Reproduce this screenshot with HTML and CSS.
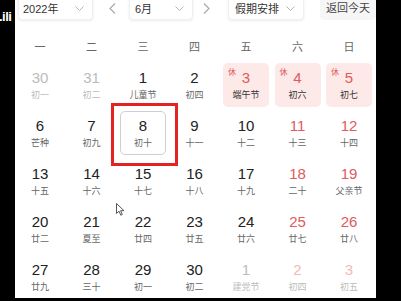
FILE: index.html
```html
<!DOCTYPE html>
<html lang="zh-CN">
<head>
    <meta charset="UTF-8">
    <meta name="viewport" content="width=device-width, initial-scale=1.0">
    <title>万年历 2022年6月</title>
    <link rel="stylesheet" href="styles.css">
</head>
<body>

    <!-- Logo de la vidéo -->
    <div class="logo">.ili</div>

    <div class="screen">

        <!-- Barre d'outils -->
        <div class="toolbar">
            <div class="select select-year">
                <span>2022年</span>
                <svg class="chevron" width="9" height="5" viewBox="0 0 9 5"><polyline points="0.5,0.5 4.5,4.5 8.5,0.5" /></svg>
            </div>
            <div class="nav nav-prev">
                <svg width="7" height="11" viewBox="0 0 7 11"><polyline points="6,0.5 1,5.5 6,10.5" /></svg>
            </div>
            <div class="select select-month">
                <span>6月</span>
                <svg class="chevron" width="9" height="5" viewBox="0 0 9 5"><polyline points="0.5,0.5 4.5,4.5 8.5,0.5" /></svg>
            </div>
            <div class="nav nav-next">
                <svg width="7" height="11" viewBox="0 0 7 11"><polyline points="1,0.5 6,5.5 1,10.5" /></svg>
            </div>
            <div class="select select-holiday">
                <span>假期安排</span>
                <svg class="chevron" width="9" height="5" viewBox="0 0 9 5"><polyline points="0.5,0.5 4.5,4.5 8.5,0.5" /></svg>
            </div>
            <div class="btn-today">返回今天</div>
        </div>

        <!-- En-tête des jours -->
        <div class="weekdays">
            <div>一</div><div>二</div><div>三</div><div>四</div><div>五</div><div>六</div><div>日</div>
        </div>

        <!-- Grille des jours -->
        <div class="days">
            <div class="day other"><div class="num">30</div><div class="lunar">初一</div></div>
            <div class="day other"><div class="num">31</div><div class="lunar">初二</div></div>
            <div class="day"><div class="num">1</div><div class="lunar">儿童节</div></div>
            <div class="day"><div class="num">2</div><div class="lunar">初四</div></div>
            <div class="day rest"><span class="tag">休</span><div class="num">3</div><div class="lunar">端午节</div></div>
            <div class="day rest"><span class="tag">休</span><div class="num">4</div><div class="lunar">初六</div></div>
            <div class="day rest"><span class="tag">休</span><div class="num">5</div><div class="lunar">初七</div></div>

            <div class="day"><div class="num">6</div><div class="lunar">芒种</div></div>
            <div class="day"><div class="num">7</div><div class="lunar">初九</div></div>
            <div class="day selected"><div class="num">8</div><div class="lunar">初十</div></div>
            <div class="day"><div class="num">9</div><div class="lunar">十一</div></div>
            <div class="day"><div class="num">10</div><div class="lunar">十二</div></div>
            <div class="day weekend"><div class="num">11</div><div class="lunar">十三</div></div>
            <div class="day weekend"><div class="num">12</div><div class="lunar">十四</div></div>

            <div class="day"><div class="num">13</div><div class="lunar">十五</div></div>
            <div class="day"><div class="num">14</div><div class="lunar">十六</div></div>
            <div class="day"><div class="num">15</div><div class="lunar">十七</div></div>
            <div class="day"><div class="num">16</div><div class="lunar">十八</div></div>
            <div class="day"><div class="num">17</div><div class="lunar">十九</div></div>
            <div class="day weekend"><div class="num">18</div><div class="lunar">二十</div></div>
            <div class="day weekend"><div class="num">19</div><div class="lunar">父亲节</div></div>

            <div class="day"><div class="num">20</div><div class="lunar">廿二</div></div>
            <div class="day"><div class="num">21</div><div class="lunar">夏至</div></div>
            <div class="day"><div class="num">22</div><div class="lunar">廿四</div></div>
            <div class="day"><div class="num">23</div><div class="lunar">廿五</div></div>
            <div class="day"><div class="num">24</div><div class="lunar">廿六</div></div>
            <div class="day weekend"><div class="num">25</div><div class="lunar">廿七</div></div>
            <div class="day weekend"><div class="num">26</div><div class="lunar">廿八</div></div>

            <div class="day"><div class="num">27</div><div class="lunar">廿九</div></div>
            <div class="day"><div class="num">28</div><div class="lunar">三十</div></div>
            <div class="day"><div class="num">29</div><div class="lunar">初一</div></div>
            <div class="day"><div class="num">30</div><div class="lunar">初二</div></div>
            <div class="day other"><div class="num">1</div><div class="lunar">建党节</div></div>
            <div class="day other weekend"><div class="num">2</div><div class="lunar">初四</div></div>
            <div class="day other weekend"><div class="num">3</div><div class="lunar">初五</div></div>
        </div>

        <!-- Cadre rouge d'annotation -->
        <div class="highlight"></div>

        <!-- Curseur de la souris -->
        <svg class="cursor" width="9" height="13" viewBox="0 0 9 13">
            <path d="M0.5,0.5 L0.5,10.5 L3,8.2 L4.8,12.2 L6.3,11.5 L4.6,7.7 L8,7.7 Z" />
        </svg>
    </div>

</body>
</html>
```

FILE: styles.css
```css
/* Style général */
body {
    margin: 0;
    background: #000;
    font-family: "Liberation Sans", "Noto Sans CJK SC", sans-serif;
}

.logo {
    position: absolute;
    left: -1px;
    top: 9px;
    color: #fff;
    font-size: 13px;
    font-weight: bold;
    letter-spacing: -0.5px;
}

.screen {
    position: relative;
    width: 361px;
    height: 298px;
    margin-left: 15px;
    background: #fff;
    overflow: hidden;
}

/* Barre d'outils */
.toolbar {
    display: flex;
    align-items: center;
    height: 24px;
    margin-top: -4px;
    padding-left: 3px;
    font-size: 11px;
    color: #333;
}
.select {
    display: flex;
    align-items: center;
    justify-content: space-between;
    box-sizing: border-box;
    height: 24px;
    padding: 0 8px 0 4px;
    background: #fff;
    border: 1px solid #f0f0f0;
    border-radius: 4px;
    box-shadow: 0 1px 3px rgba(0, 0, 0, 0.08);
}
.select-year { width: 75px; }
.select-month { width: 64px; padding-left: 5px; }
.select-holiday { width: 76px; padding-left: 6px; }

.chevron polyline {
    fill: none;
    stroke: #b5b5b5;
    stroke-width: 1;
}

.nav {
    display: flex;
    align-items: center;
}
.nav polyline {
    fill: none;
    stroke: #aaa;
    stroke-width: 1.2;
}
.nav-prev { margin: 0 13px 0 16px; }
.nav-next { margin: 0 18px 0 10px; }

.btn-today {
    box-sizing: border-box;
    height: 24px;
    line-height: 24px;
    margin-left: 16px;
    padding: 0 6px;
    background: #f6f6f6;
    border-radius: 4px;
    color: #444;
}

/* En-tête des jours */
.weekdays,
.days {
    display: grid;
    grid-template-columns: repeat(7, 46px);
    column-gap: 5.5px;
    padding-left: 2px;
}
.weekdays {
    margin-top: 17px;
    height: 20px;
    line-height: 20px;
    text-align: center;
    font-size: 11px;
    color: #666;
}

/* Grille des jours */
.days {
    margin-top: 6px;
    grid-auto-rows: 44px;
    row-gap: 4px;
}
.day {
    position: relative;
    box-sizing: border-box;
    padding-top: 6px;
    text-align: center;
    border-radius: 5px;
}
.num {
    height: 18px;
    line-height: 18px;
    font-size: 15px;
    color: #222;
}
.lunar {
    margin-top: 1px;
    line-height: 14px;
    font-size: 9px;
    color: #666;
}

.weekend .num { color: #e05a5e; }

.other .num,
.other .lunar { color: #bbb; }
.other.weekend .num { color: #f3b8b8; }

.rest { background: #fde9e8; }
.rest .num { color: #e05a5e; }
.rest .lunar { color: #333; }
.tag {
    position: absolute;
    left: 5px;
    top: 3px;
    font-size: 8px;
    color: #e05a5e;
}

.selected {
    border: 1px solid #cfcfcf;
    padding-top: 5px;
}

/* Annotation et curseur */
.highlight {
    position: absolute;
    left: 96px;
    top: 103px;
    width: 61px;
    height: 57px;
    border: 3px solid #e3231f;
}
.cursor {
    position: absolute;
    left: 101px;
    top: 203px;
}
.cursor path {
    fill: #fff;
    stroke: #555;
    stroke-width: 1;
}
```
